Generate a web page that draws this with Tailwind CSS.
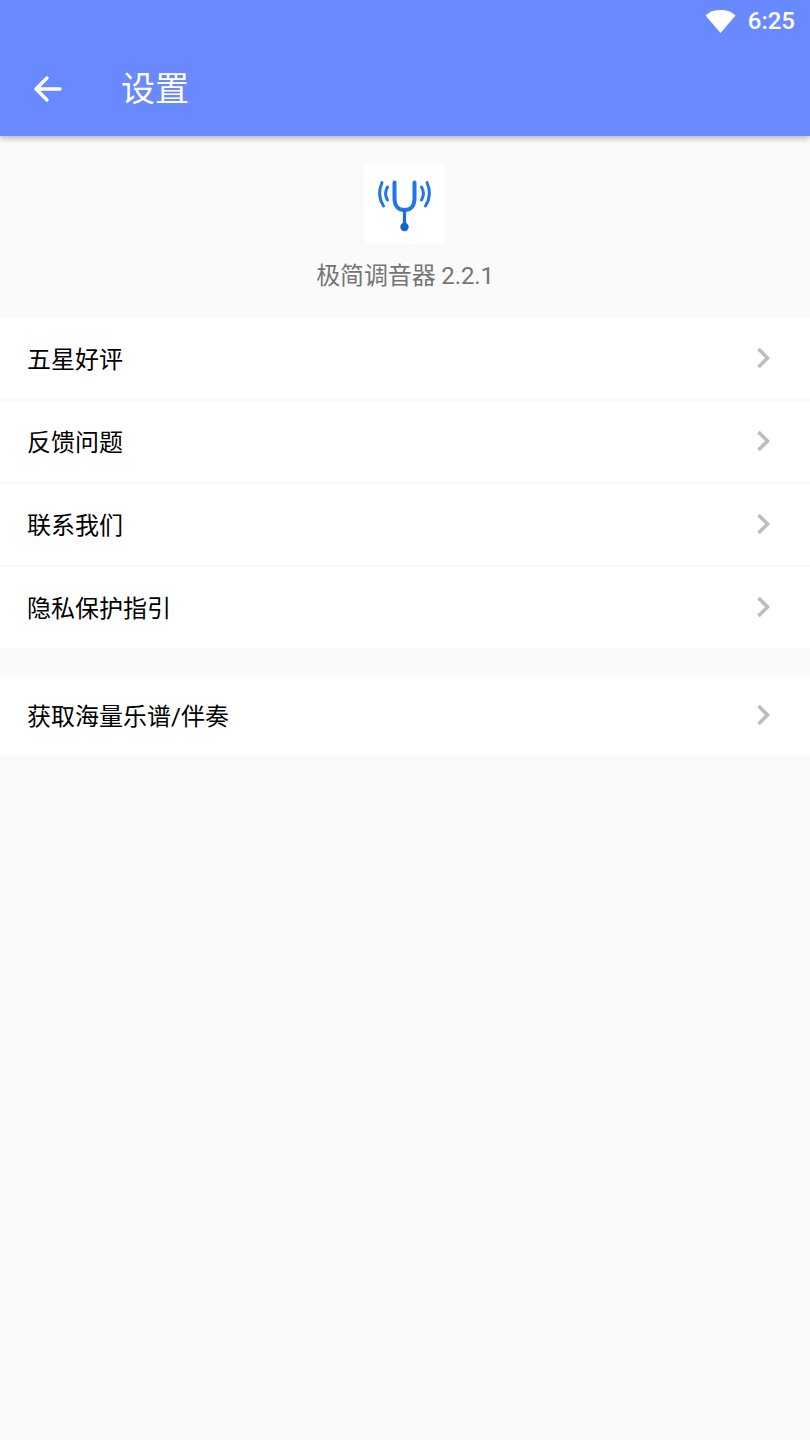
<!DOCTYPE html>
<html lang="zh-CN">
  <head>
    <meta charset="UTF-8" />
    <meta name="viewport" content="width=device-width, initial-scale=1.0" />
    <title>设置</title>
    <script src="https://cdn.jsdelivr.net/npm/@tailwindcss/browser@4"></script>
  </head>
  <body class="bg-[#fafafa] font-['Roboto','Noto_Sans_CJK_SC',sans-serif]">
    <div class="w-[810px] h-[1440px] flex flex-col overflow-hidden">
      <!-- Header -->
      <div class="relative z-10 bg-[#6889ff] h-[136px] shrink-0 shadow-[0_2px_6px_rgba(0,0,0,0.3)] text-white">
        <div class="h-[42px] flex items-center justify-end pr-[15px] gap-[12px]">
          <svg class="mb-[1px]" width="31" height="24" viewBox="0 0 31 24">
            <path d="M0.500 6.500C4.500 2.800 9.500 1 15.500 1s11 1.800 15 5.500L15.500 24z" fill="#fff" />
          </svg>
          <span class="text-[24px] font-medium leading-none">6:25</span>
        </div>
        <div class="flex items-center h-[94px]">
          <div class="w-[121px] pl-[33px]">
            <svg width="30" height="30" viewBox="0 0 30 30" fill="none" stroke="#fff" stroke-width="3.400" stroke-linecap="round" stroke-linejoin="round">
              <path d="M3 15h24M14 4 3 15l11 11" />
            </svg>
          </div>
          <span class="text-[34px] leading-none">设置</span>
        </div>
      </div>

      <!-- App info -->
      <div class="h-[182px] shrink-0 flex flex-col items-center pt-[27px]">
        <div class="w-[81px] h-[81px] mr-[1px] bg-white rounded-[6px] flex items-center justify-center">
          <svg width="81" height="81" viewBox="0 0 81 81" fill="none">
            <path d="M30.500 19.500v16c0 7.500 4 11.500 10 11.500s10-4 10-11.500v-16" stroke="#2076e6" stroke-width="4" stroke-linecap="round" />
            <path d="M40.500 47v17" stroke="#1a6adb" stroke-width="3.200" />
            <circle cx="40.500" cy="64" r="4.200" fill="#1262d2" />
            <path d="M18 19.500c-3.500 8-3 16.500 1.500 23.500M23.500 24c-2.500 4.500-2.500 9 0 13M63 19.500c3.500 8 3 16.500-1.500 23.500M57.500 24c2.500 4.500 2.500 9 0 13" stroke="#2076e6" stroke-width="3" stroke-linecap="round" />
          </svg>
        </div>
        <span class="mt-[18px] text-[24px] leading-[28px] tracking-[-0.13px] text-[#757575]">极简调音器 2.2.1</span>
      </div>

      <!-- Menu -->
      <div class="bg-white flex flex-col shrink-0">
        <div class="h-[83px] border-b-2 border-[#f9f9f9] flex items-center justify-between pl-[27px] pr-[38px] text-[24px] text-black">
          <span class="pt-[2px]">五星好评</span>
          <svg class="mb-[2px]" width="16" height="22" viewBox="0 0 16 22" fill="none" stroke="#bdbdbd" stroke-width="3.600"><path d="M2.500 2 11.500 11l-9 9" /></svg>
        </div>
        <div class="h-[83px] border-b-2 border-[#f9f9f9] flex items-center justify-between pl-[27px] pr-[38px] text-[24px] text-black">
          <span class="pt-[2px]">反馈问题</span>
          <svg class="mb-[2px]" width="16" height="22" viewBox="0 0 16 22" fill="none" stroke="#bdbdbd" stroke-width="3.600"><path d="M2.500 2 11.500 11l-9 9" /></svg>
        </div>
        <div class="h-[83px] border-b-2 border-[#f9f9f9] flex items-center justify-between pl-[27px] pr-[38px] text-[24px] text-black">
          <span class="pt-[2px]">联系我们</span>
          <svg class="mb-[2px]" width="16" height="22" viewBox="0 0 16 22" fill="none" stroke="#bdbdbd" stroke-width="3.600"><path d="M2.500 2 11.500 11l-9 9" /></svg>
        </div>
        <div class="h-[81px] flex items-center justify-between pl-[27px] pr-[38px] text-[24px] text-black">
          <span class="pt-[2px]">隐私保护指引</span>
          <svg class="mb-[2px]" width="16" height="22" viewBox="0 0 16 22" fill="none" stroke="#bdbdbd" stroke-width="3.600"><path d="M2.500 2 11.500 11l-9 9" /></svg>
        </div>
      </div>

      <div class="mt-[27px] bg-white shrink-0">
        <div class="h-[81px] flex items-center justify-between pl-[27px] pr-[38px] text-[24px] text-black">
          <span class="pt-[2px]">获取海量乐谱/伴奏</span>
          <svg class="mb-[2px]" width="16" height="22" viewBox="0 0 16 22" fill="none" stroke="#bdbdbd" stroke-width="3.600"><path d="M2.500 2 11.500 11l-9 9" /></svg>
        </div>
      </div>
    </div>
  </body>
</html>
